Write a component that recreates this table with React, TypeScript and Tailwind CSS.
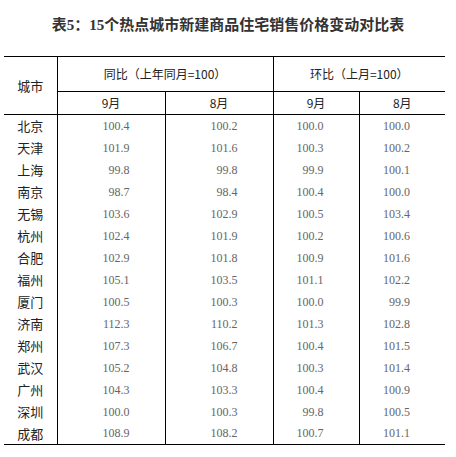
const rows: [string, string, string, string, string][] = [
  ['北京', '100.4', '100.2', '100.0', '100.0'],
  ['天津', '101.9', '101.6', '100.3', '100.2'],
  ['上海', '99.8', '99.8', '99.9', '100.1'],
  ['南京', '98.7', '98.4', '100.4', '100.0'],
  ['无锡', '103.6', '102.9', '100.5', '103.4'],
  ['杭州', '102.4', '101.9', '100.2', '100.6'],
  ['合肥', '102.9', '101.8', '100.9', '101.6'],
  ['福州', '105.1', '103.5', '101.1', '102.2'],
  ['厦门', '100.5', '100.3', '100.0', '99.9'],
  ['济南', '112.3', '110.2', '101.3', '102.8'],
  ['郑州', '107.3', '106.7', '100.4', '101.5'],
  ['武汉', '105.2', '104.8', '100.3', '101.4'],
  ['广州', '104.3', '103.3', '100.4', '100.9'],
  ['深圳', '100.0', '100.3', '99.8', '100.5'],
  ['成都', '108.9', '108.2', '100.7', '101.1'],
]

const cjk = "font-['Noto_Sans_CJK_SC',sans-serif]"
const num = "font-['Liberation_Serif','Noto_Sans_CJK_SC',serif]"

export default function App() {
  return (
    <div className="w-[456px] h-[457px] bg-white overflow-hidden">
      {/* Title */}
      <div className="h-[56px] pt-[12px] text-center">
        <span className={`text-[15px] font-bold text-[#333] ${num} leading-[22px]`}>
          表5：15个热点城市新建商品住宅销售价格变动对比表
        </span>
      </div>

      <table className="ml-[4px] w-[441px] border-collapse table-fixed">
        <colgroup>
          <col className="w-[53px]" />
          <col className="w-[108px]" />
          <col className="w-[108px]" />
          <col className="w-[86px]" />
          <col className="w-[86px]" />
        </colgroup>
        <thead className={`${cjk} text-[#222]`}>
          <tr className="h-[35px] border-t border-black">
            <th rowSpan={2} className="font-normal text-[13px] border-b border-r border-black">城市</th>
            <th colSpan={2} className="font-normal text-[12px] border-b border-r border-black">
              同比（上年同月=100）
            </th>
            <th colSpan={2} className="font-normal text-[12px] border-b border-black">
              环比（上月=100）
            </th>
          </tr>
          <tr className="h-[23px]">
            <th className="font-normal text-[12px] border-b border-r border-black">9月</th>
            <th className="font-normal text-[12px] border-b border-r border-black">8月</th>
            <th className="font-normal text-[12px] border-b border-r border-black">9月</th>
            <th className="font-normal text-[12px] border-b border-black">8月</th>
          </tr>
        </thead>
        <tbody>
          {rows.map((r, i) => (
            <tr key={r[0]} className={`h-[22px] ${i === rows.length - 1 ? 'border-b border-black' : ''}`}>
              <td className={`text-center text-[13px] text-[#222] border-r border-black ${cjk}`}>{r[0]}</td>
              <td className={`text-right pr-[35px] text-[12px] text-[#666] border-r border-black ${num}`}>{r[1]}</td>
              <td className={`text-right pr-[35px] text-[12px] text-[#666] border-r border-black ${num}`}>{r[2]}</td>
              <td className={`text-right pr-[35px] text-[12px] text-[#666] border-r border-black ${num}`}>{r[3]}</td>
              <td className={`text-right pr-[35px] text-[12px] text-[#666] ${num}`}>{r[4]}</td>
            </tr>
          ))}
        </tbody>
      </table>
    </div>
  )
}
